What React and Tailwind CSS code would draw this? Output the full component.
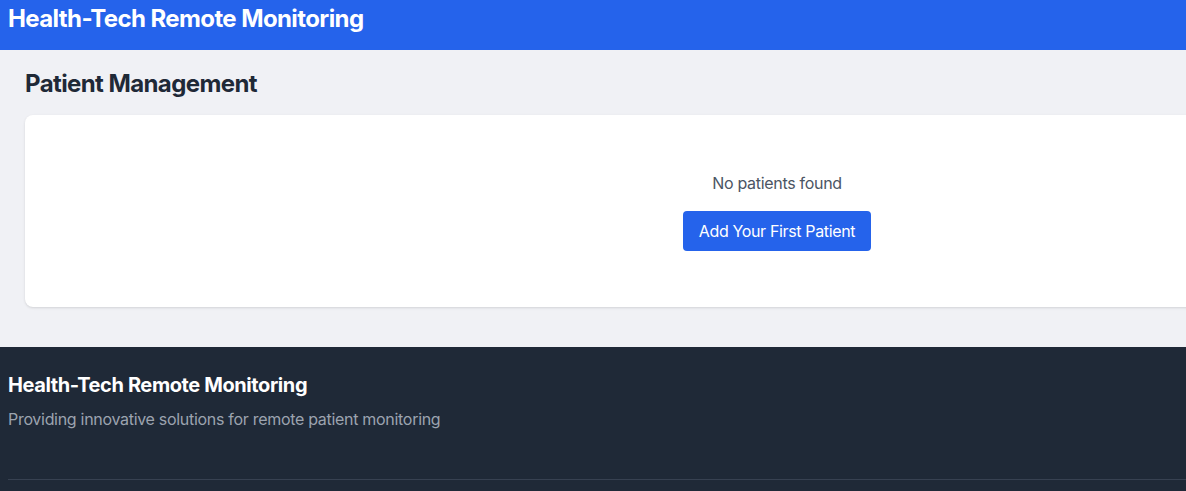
export default function App() {
  return (
    <div className="w-screen overflow-hidden" style={{ fontFamily: "Inter, 'Noto Sans', sans-serif" }}>
      <div className="w-[1554px]">
        <header className="h-[50px] bg-[#2563eb] px-2 pt-[3px]">
          <h1 className="text-2xl leading-8 font-bold tracking-[-0.6px] text-white">Health-Tech Remote Monitoring</h1>
        </header>
        <main className="bg-[#f0f1f5] px-[25px] pt-[18px] pb-10">
          <h2 className="text-2xl leading-8 font-bold tracking-[-0.6px] text-[#1f2937] mb-[15px]">Patient Management</h2>
          <div className="bg-white rounded-lg shadow-[0_1px_3px_0_rgba(0,0,0,0.1),0_1px_2px_-1px_rgba(0,0,0,0.1)] py-14 flex flex-col items-center">
            <p className="text-base leading-6 tracking-[-0.3px] text-[#4b5563] mb-4">No patients found</p>
            <button className="bg-[#2563eb] text-white text-base leading-6 tracking-[-0.35px] px-4 py-2 rounded">Add Your First Patient</button>
          </div>
        </main>
        <footer className="bg-[#1f2937] px-2 pt-6 pb-10">
          <h3 className="text-xl leading-7 font-bold tracking-[-0.4px] text-white mb-2">Health-Tech Remote Monitoring</h3>
          <p className="text-base leading-6 tracking-[-0.3px] text-[#9ca3af]">Providing innovative solutions for remote patient monitoring</p>
          <div className="mt-[48px] border-t border-[#374151] pt-8 h-10" />
        </footer>
      </div>
    </div>
  );
}
